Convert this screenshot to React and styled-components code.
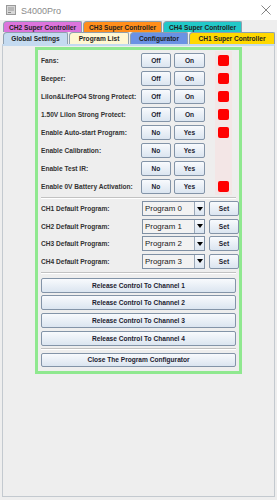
import React from 'react';
import styled, { createGlobalStyle } from 'styled-components';

const GlobalStyle = createGlobalStyle`
  html, body {
    margin: 0;
    padding: 0;
    background: #eeeeee;
  }
  body {
    font-family: "Liberation Sans", Arial, sans-serif;
  }
`

const Window = styled.div`
  width: 277px;
  height: 500px;
  display: flex;
  flex-direction: column;
  background: #eeeeee;
  overflow: hidden;
`

const TitleBar = styled.div`
  height: 20px;
  flex: none;
  background: #ffffff;
  display: flex;
  align-items: center;
  padding: 0 6px;
  gap: 5px;
`

const Title = styled.span`
  font-size: 9px;
  color: #8a8a8a;
  flex: 1;
  padding-top: 1px;
`

const TabArea = styled.div`
  padding: 1px 1px 0 3px;
  display: flex;
  flex-direction: column;
`

const TabRun = styled.div`
  display: flex;
  height: ${p => p.$h}px;
`

const Tab = styled.div`
  width: ${p => p.$w}px;
  flex: ${p => (p.$grow ? 1 : 'none')};
  background: ${p => p.$bg};
  border: 1px solid #8f9fae;
  border-bottom: none;
  border-radius: 4px 2px 0 0;
  box-sizing: border-box;
  display: flex;
  align-items: center;
  justify-content: center;
  font-size: 6.6px;
  font-weight: bold;
  color: #1e1e1e;
  white-space: nowrap;
  margin-right: 1px;
`

const Content = styled.div`
  flex: 1;
  margin: 0 2px 3px 2px;
  border: 1px solid #c3c9cf;
  border-top: 2px solid #c4daf0;
  padding-top: 1px;
`

const GreenPanel = styled.div`
  width: 207px;
  box-sizing: border-box;
  margin: 0 auto;
  border: 3px solid #8fe88f;
  padding: 1px 3px 4px 3px;
  display: flex;
  flex-direction: column;
`

const SwitchRow = styled.div`
  height: 18px;
  display: grid;
  grid-template-columns: 97px 30px 31px 17px;
  column-gap: 3px;
  align-items: center;
  & > *:last-child {
    margin-left: 7px;
  }
`

const Label = styled.span`
  font-size: 6.6px;
  font-weight: bold;
  color: #333333;
  white-space: nowrap;
`

const Button = styled.div`
  height: ${p => p.$h || 15}px;
  box-sizing: border-box;
  border: 1px solid #8394a8;
  border-radius: 2px;
  background: linear-gradient(#f8fafd, #dbe5f0);
  display: flex;
  align-items: center;
  justify-content: center;
  font-size: 6.6px;
  font-weight: bold;
  color: #1c1c30;
  white-space: nowrap;
`

const Led = styled.div`
  width: 17px;
  height: 18px;
  background: #f3e6e6;
  display: flex;
  align-items: center;
  justify-content: center;
  &::after {
    content: '';
    width: 11px;
    height: 11px;
    border-radius: 2px;
    background: ${p => (p.$on ? '#ff0000' : 'transparent')};
  }
`

const Separator = styled.div`
  height: 0;
  border-top: 1px solid #c2c2c2;
  border-bottom: 1px solid #ffffff;
  margin: ${p => p.$m};
`

const ProgramList = styled.div`
  display: flex;
  flex-direction: column;
  gap: 2.5px;
`

const ProgramRow = styled.div`
  height: 15px;
  display: grid;
  grid-template-columns: 97px 63px 30px;
  column-gap: 4px;
  align-items: center;
`

const Combo = styled.div`
  height: 15px;
  box-sizing: border-box;
  border: 1px solid #7f90a4;
  background: #f2f2f2;
  display: flex;
  align-items: stretch;
`

const ComboText = styled.span`
  flex: 1;
  font-size: 7.9px;
  color: #1a1a1a;
  padding-left: 2px;
  display: flex;
  align-items: center;
`

const ComboArrow = styled.div`
  width: 9px;
  border-left: 1px solid #9aa8b8;
  background: linear-gradient(#f8fafd, #dbe5f0);
  display: flex;
  align-items: center;
  justify-content: center;
  &::after {
    content: '';
    border-left: 3px solid transparent;
    border-right: 3px solid transparent;
    border-top: 4px solid #000000;
  }
`

const ButtonStack = styled.div`
  display: flex;
  flex-direction: column;
  gap: 2.7px;
`

const AppIcon = () => (
  <svg width="10" height="10" viewBox="0 0 10 10">
    <rect x="0.5" y="0.5" width="9" height="9" fill="#d8d8d8" stroke="#9a9a9a" />
    <rect x="2" y="2" width="6" height="4" fill="#b8b8b8" />
    <rect x="2" y="7" width="3" height="1" fill="#8a8a8a" />
  </svg>
)

const CloseIcon = () => (
  <svg width="10" height="10" viewBox="0 0 10 10">
    <path d="M0.5 0.5 L9.5 9.5 M9.5 0.5 L0.5 9.5" stroke="#777" strokeWidth="0.9" />
  </svg>
)

const switches = [
  ['Fans:', 'Off', 'On', true],
  ['Beeper:', 'Off', 'On', true],
  ['LiIon&LifePO4 Strong Protect:', 'Off', 'On', true],
  ['1.50V LiIon Strong Protect:', 'Off', 'On', true],
  ['Enable Auto-start Program:', 'No', 'Yes', true],
  ['Enable Calibration:', 'No', 'Yes', false],
  ['Enable Test IR:', 'No', 'Yes', false],
  ['Enable 0V Battery Activation:', 'No', 'Yes', true],
]

export default function App() {
  return (
    <>
      <GlobalStyle />
      <Window>
        <TitleBar>
          <AppIcon />
          <Title>S4000Pro</Title>
          <CloseIcon />
        </TitleBar>
        <TabArea>
          <TabRun $h={11}>
            <Tab $w={79} $bg="#dc74dc">CH2 Super Controller</Tab>
            <Tab $w={79} $bg="#ff8e1c">CH3 Super Controller</Tab>
            <Tab $w={79} $bg="#22c8c8">CH4 Super Controller</Tab>
          </TabRun>
          <TabRun $h={12}>
            <Tab $w={65} $bg="#c4daf0">Global Settings</Tab>
            <Tab $w={60} $bg="#fff7d2">Program List</Tab>
            <Tab $w={58} $bg="#6a92e4">Configurator</Tab>
            <Tab $grow $bg="#ffd800">CH1 Super Controller</Tab>
          </TabRun>
        </TabArea>
        <Content>
          <GreenPanel>
            {switches.map(([label, a, b, on]) => (
              <SwitchRow key={label}>
                <Label>{label}</Label>
                <Button>{a}</Button>
                <Button>{b}</Button>
                <Led $on={on} />
              </SwitchRow>
            ))}
            <Separator $m="2px 0 2px 0" />
            <ProgramList>
              {[0, 1, 2, 3].map(i => (
                <ProgramRow key={i}>
                  <Label>CH{i + 1} Default Program:</Label>
                  <Combo>
                    <ComboText>Program {i}</ComboText>
                    <ComboArrow />
                  </Combo>
                  <Button>Set</Button>
                </ProgramRow>
              ))}
            </ProgramList>
            <Separator $m="3px 0 4px 0" />
            <ButtonStack>
              {[1, 2, 3, 4].map(n => (
                <Button key={n}>Release Control To Channel {n}</Button>
              ))}
            </ButtonStack>
            <Separator $m="2px 0 3px 0" />
            <Button $h={14.5}>Close The Program Configurator</Button>
          </GreenPanel>
        </Content>
      </Window>
    </>
  )
}
